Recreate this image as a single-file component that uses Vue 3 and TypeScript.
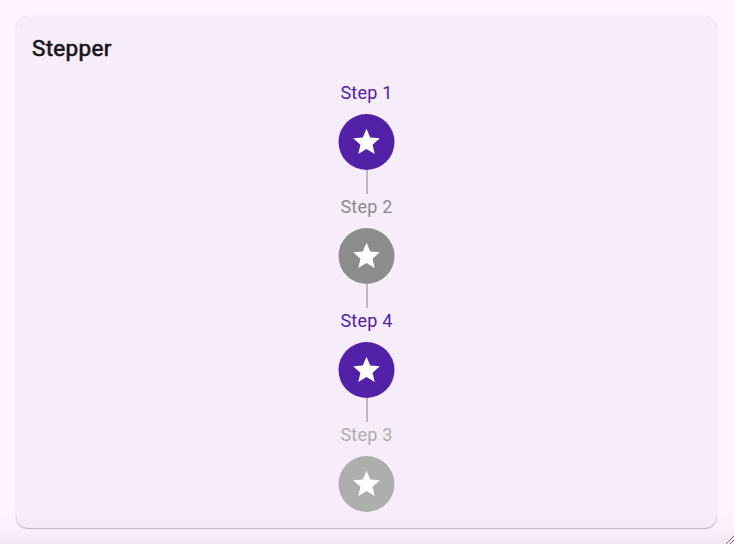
<script setup lang="ts">
interface Step {
  label: string
  state: 'active' | 'inactive' | 'disabled'
}

const steps: Step[] = [
  { label: 'Step 1', state: 'active' },
  { label: 'Step 2', state: 'inactive' },
  { label: 'Step 4', state: 'active' },
  { label: 'Step 3', state: 'disabled' },
]
</script>

<template>
  <main class="page">
    <section class="card">
      <h2 class="title">Stepper</h2>
      <ol class="stepper">
        <li v-for="step in steps" :key="step.label" class="step" :class="step.state">
          <span class="label">{{ step.label }}</span>
          <svg class="badge" viewBox="-28.5 -28 57 56" aria-hidden="true">
            <circle r="28" />
            <path
              class="star"
              transform="scale(1.3333) translate(-12 -12)"
              d="M12 17.27L18.18 21l-1.64-7.03L22 9.24l-7.19-.61L12 2 9.19 8.63 2 9.24l5.46 4.73L5.82 21z"
            />
          </svg>
        </li>
      </ol>
    </section>
    <div class="shade"></div>
    <svg class="grip" viewBox="0 0 8 8" aria-hidden="true">
      <path d="M0 8L8 0M4 8L8 4" />
    </svg>
  </main>
</template>

<style>
body {
  background: #fef3ff;
}
</style>

<style scoped>
.page {
  position: relative;
  box-sizing: border-box;
  height: 544px;
  padding: 16px;
  overflow: hidden;
  font-family: Roboto, sans-serif;
}

.card {
  box-sizing: border-box;
  height: 512px;
  width: 701px;
  padding: 16px;
  border-radius: 12px;
  background: #f7ecf9;
  box-shadow: 0 1px 1px rgba(0, 0, 0, 0.25), 0 0 1px rgba(0, 0, 0, 0.14);
}

.title {
  margin: 0;
  font-size: 22.5px;
  line-height: 32px;
  font-weight: 400;
  letter-spacing: 0.3px;
  -webkit-text-stroke: 0.65px currentColor;
  color: #17171b;
}

.stepper {
  display: flex;
  flex-direction: column;
  align-items: center;
  margin: 16px 0 0;
  padding: 0;
  list-style: none;
}

.step {
  display: flex;
  flex-direction: column;
  align-items: center;
  color: #5320a8;
}

.step:not(:last-child)::after {
  content: '';
  width: 2px;
  height: 24px;
  background: #bdb7bf;
}

.label {
  font-size: 18px;
  line-height: 26px;
  letter-spacing: 0.2px;
  margin-bottom: 8px;
}

.badge {
  display: block;
  width: 57px;
  height: 56px;
  fill: currentColor;
}

.star {
  fill: #fff;
}

.inactive {
  color: #8c8c8c;
}

.disabled {
  color: #aeaeae;
}

.shade {
  position: absolute;
  inset: auto 0 0;
  height: 36px;
  background: linear-gradient(to bottom, transparent, rgba(70, 40, 70, 0.02) 60%, rgba(70, 40, 70, 0.06));
  pointer-events: none;
}

.grip {
  position: absolute;
  right: 0;
  bottom: 0;
  width: 8px;
  height: 8px;
  fill: none;
  stroke: #777078;
  stroke-width: 1;
}
</style>
